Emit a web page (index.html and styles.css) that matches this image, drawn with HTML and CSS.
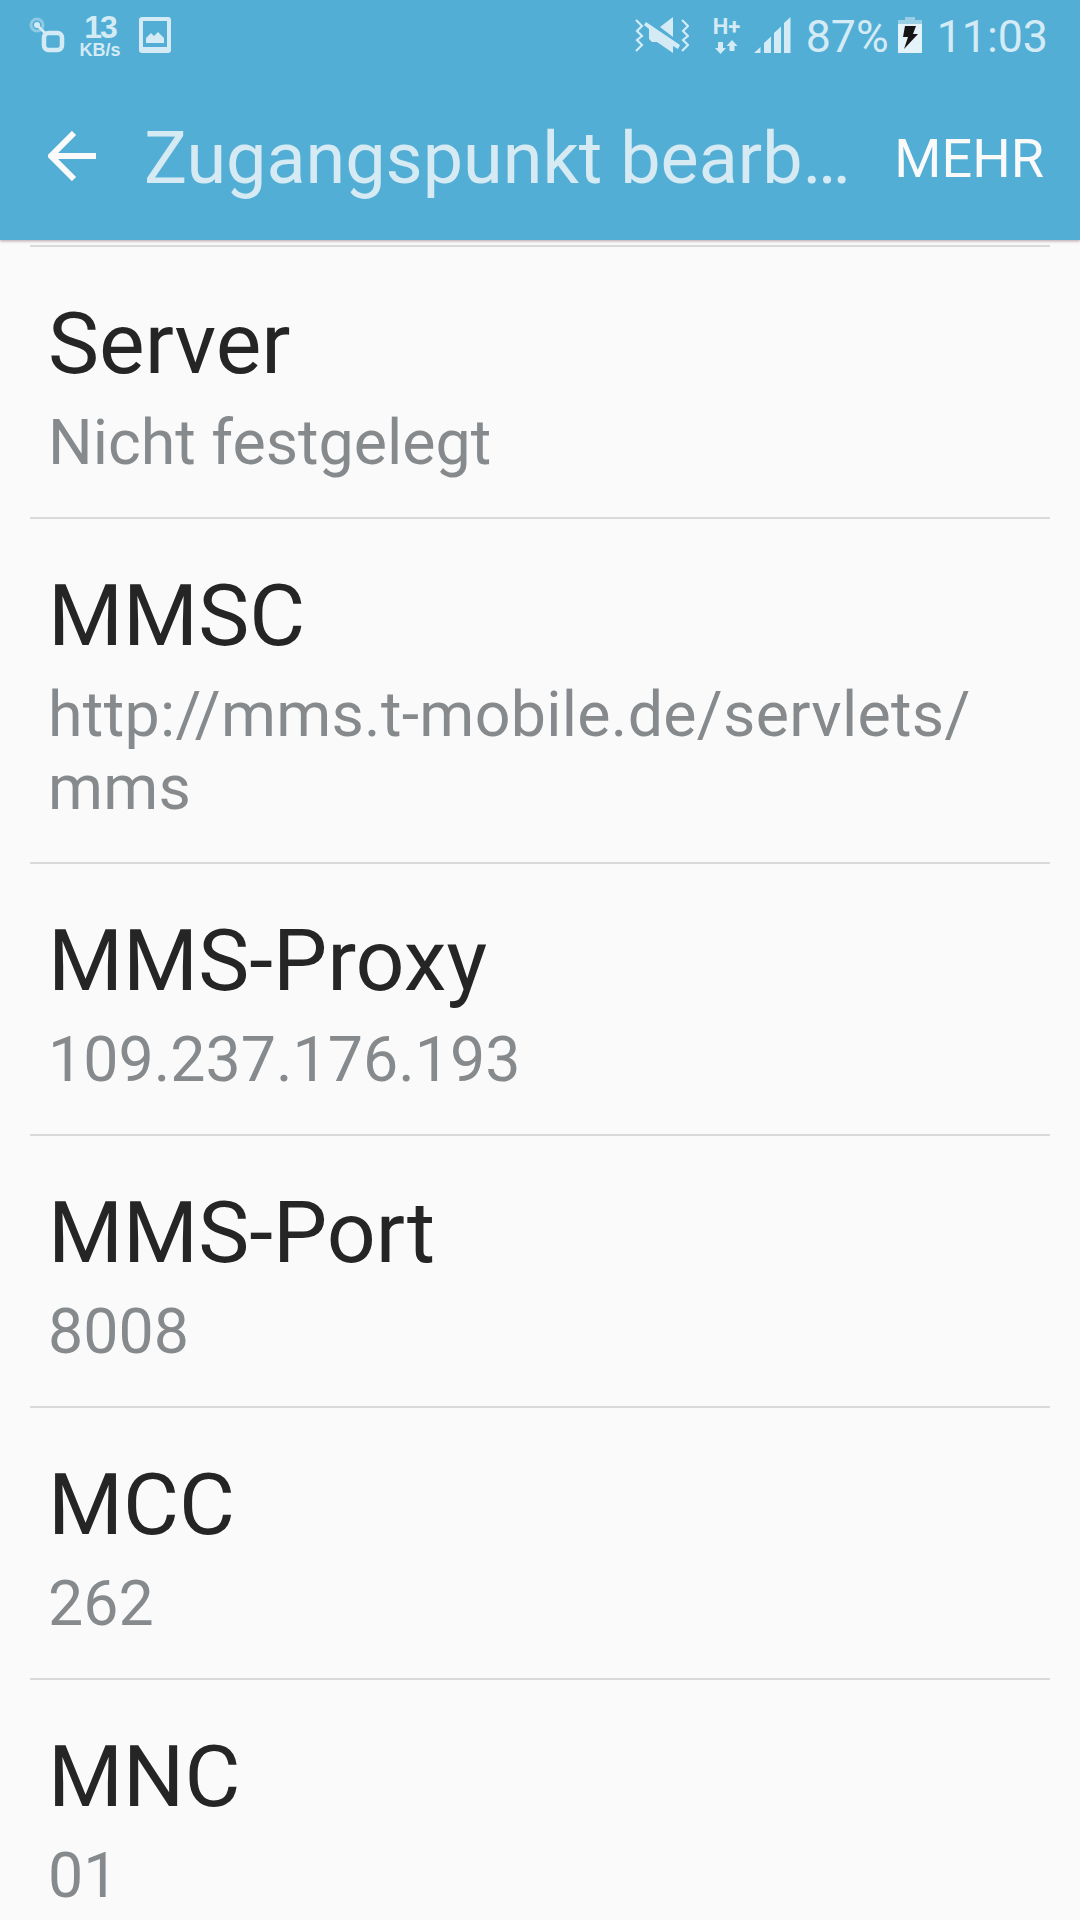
FILE: index.html
```html
<!DOCTYPE html>
<html lang="de">
  <head>
    <meta charset="UTF-8" />
    <meta name="viewport" content="width=device-width, initial-scale=1.0" />
    <title>Zugangspunkt bearbeiten</title>
    <link rel="stylesheet" href="styles.css">
  </head>

  <body>
    <header class="header">
      <div class="status-bar">
        <div class="status-left">
          <svg class="icon-link" width="36" height="37" viewBox="0 0 36 37">
            <circle cx="8" cy="8" r="6" fill="none" stroke="#8ecae3" stroke-width="3" />
            <circle cx="8" cy="8" r="3" fill="#d4ebf5" />
            <path d="M8 8L18 18" stroke="#d4ebf5" stroke-width="2.5" />
            <rect x="15" y="16" width="18" height="17" rx="4.5" fill="none" stroke="#d4ebf5" stroke-width="4.5" />
          </svg>
          <div class="speed">
            <span class="speed-value">13</span>
            <span class="speed-unit">KB/s</span>
          </div>
          <svg width="32" height="36" viewBox="0 0 32 36">
            <path fill="#d4ebf5" fill-rule="evenodd" d="M3 0H29Q32 0 32 3V33Q32 36 29 36H3Q0 36 0 33V3Q0 0 3 0ZM4 4V30H28V4Z" />
            <path fill="#d4ebf5" d="M7 26V21L12 16L15 19L19 15L25 21V26Z" />
          </svg>
        </div>
        <div class="status-right">
          <svg class="icon-mute" width="54" height="37" viewBox="0 0 54 37">
            <g fill="none" stroke="#d4ebf5" stroke-width="2.2">
              <path d="M1 3L7 9L2 14L7 19L2 23L7 28L1 34" />
              <path d="M47 3L53 9L48 14L53 19L48 23L53 28L47 34" />
            </g>
            <path fill="#d4ebf5" d="M25 10L38 0V20Z" />
            <path fill="#d4ebf5" d="M11 5L45 28L43 32L38 29V36L22 25H17L14 22V12L9 8Z" />
          </svg>
          <div class="network">
            <span class="network-type">H+</span>
            <svg width="23" height="14" viewBox="0 0 23 14">
              <path fill="#d4ebf5" d="M3 2H8V8H11L5.500 14L0 8H3Z" />
              <path fill="#d4ebf5" d="M14.500 11H19.500V6H22.500L17 0L11.500 6H14.500Z" />
            </svg>
          </div>
          <svg class="icon-signal" width="37" height="36" viewBox="0 0 37 36">
            <path fill="#d4ebf5" d="M0 36L6.500 30V36ZM10 26L17 19.500V36H10ZM20 16L27 9.500V36H20ZM30 6L36.500 0V36H30Z" />
          </svg>
          <span class="battery-text">87%</span>
          <svg class="icon-battery" width="24" height="36" viewBox="0 0 24 36">
            <path fill="#98cfe5" d="M7 0H17V3H24V8H0V3H7Z" />
            <rect y="7" width="24" height="29" fill="#e4f3f9" />
            <path fill="#151515" d="M7 9H18L15 17H20L6 32L10 20H5Z" />
          </svg>
          <span class="clock">11:03</span>
        </div>
      </div>
      <div class="action-bar">
        <svg class="back" width="48" height="50" viewBox="0 0 48 50">
          <path d="M26 2L3 25L26 48M3 25H48" fill="none" stroke="#fafafa" stroke-width="6" />
        </svg>
        <h1>Zugangspunkt bearb…</h1>
        <button class="more">MEHR</button>
      </div>
    </header>

    <main class="list">
      <div class="row">
        <h2>Server</h2>
        <p>Nicht festgelegt</p>
      </div>
      <div class="row">
        <h2>MMSC</h2>
        <p class="url">http://mms.t-mobile.de/servlets/<wbr>mms</p>
      </div>
      <div class="row">
        <h2>MMS-Proxy</h2>
        <p>109.237.176.193</p>
      </div>
      <div class="row">
        <h2>MMS-Port</h2>
        <p>8008</p>
      </div>
      <div class="row">
        <h2>MCC</h2>
        <p>262</p>
      </div>
      <div class="row">
        <h2>MNC</h2>
        <p>01</p>
      </div>
    </main>
  </body>
</html>
```
FILE: styles.css
```css
* {
  box-sizing: border-box;
}

body {
  margin: 0;
  height: 1920px;
  overflow: hidden;
  background: #fafafa;
  font-family: Roboto, sans-serif;
}

h1,
h2,
p {
  margin: 0;
  font-weight: 400;
}

svg {
  display: block;
  flex: none;
}

.header {
  height: 240px;
  background: #52aed5;
  box-shadow: 0 1px 3px rgba(60, 20, 40, 0.4);
}

.status-bar {
  display: flex;
  justify-content: space-between;
  height: 72px;
  padding: 0 32px 0 29px;
  color: #d4ebf5;
}

.status-left,
.status-right {
  display: flex;
  align-items: flex-start;
  padding-top: 17px;
}

.speed {
  display: flex;
  flex-direction: column;
  align-items: center;
  width: 42px;
  margin: -4px 18px 0 14px;
  font-family: "Liberation Sans", sans-serif;
  font-weight: 700;
}

.speed-value {
  font-size: 32px;
  line-height: 28px;
  letter-spacing: -2px;
}

.speed-unit {
  font-size: 18px;
  line-height: 18px;
}

.network {
  margin: 0 16px 0 25px;
}

.network-type {
  display: block;
  width: 23px;
  margin-left: -1px;
  font-size: 22px;
  font-weight: 700;
  line-height: 20px;
  white-space: nowrap;
}

.network svg {
  margin: 3px 0 0 1px;
}

.battery-text,
.clock {
  font-size: 44.700px;
  line-height: 52px;
  margin-top: -6px;
}

.battery-text {
  margin-left: 15px;
}

.icon-battery {
  margin: 0 15px 0 9px;
}

.action-bar {
  display: flex;
  align-items: center;
  height: 168px;
  padding: 4px 36px 0 48px;
}

.back {
  margin-top: -4px;
}

.action-bar h1 {
  flex: 1;
  margin: 1px 0 0 48px;
  color: #d6eaf3;
  font-size: 71.900px;
  line-height: 84px;
  white-space: nowrap;
}

.more {
  padding: 0;
  border: none;
  background: none;
  color: #fafafa;
  font-family: inherit;
  font-size: 54px;
  line-height: 63px;
}

.list {
  padding: 5px 30px 0;
}

.row {
  border-top: 2px solid #d9d9d9;
  padding: 46px 18px 38px;
}

.row h2 {
  color: #252525;
  font-size: 86px;
  line-height: 101px;
}

.row p {
  margin-top: 12px;
  color: #868a8c;
  font-size: 62.700px;
  line-height: 73px;
}

.row .url {
  letter-spacing: 0.3px;
}
```
